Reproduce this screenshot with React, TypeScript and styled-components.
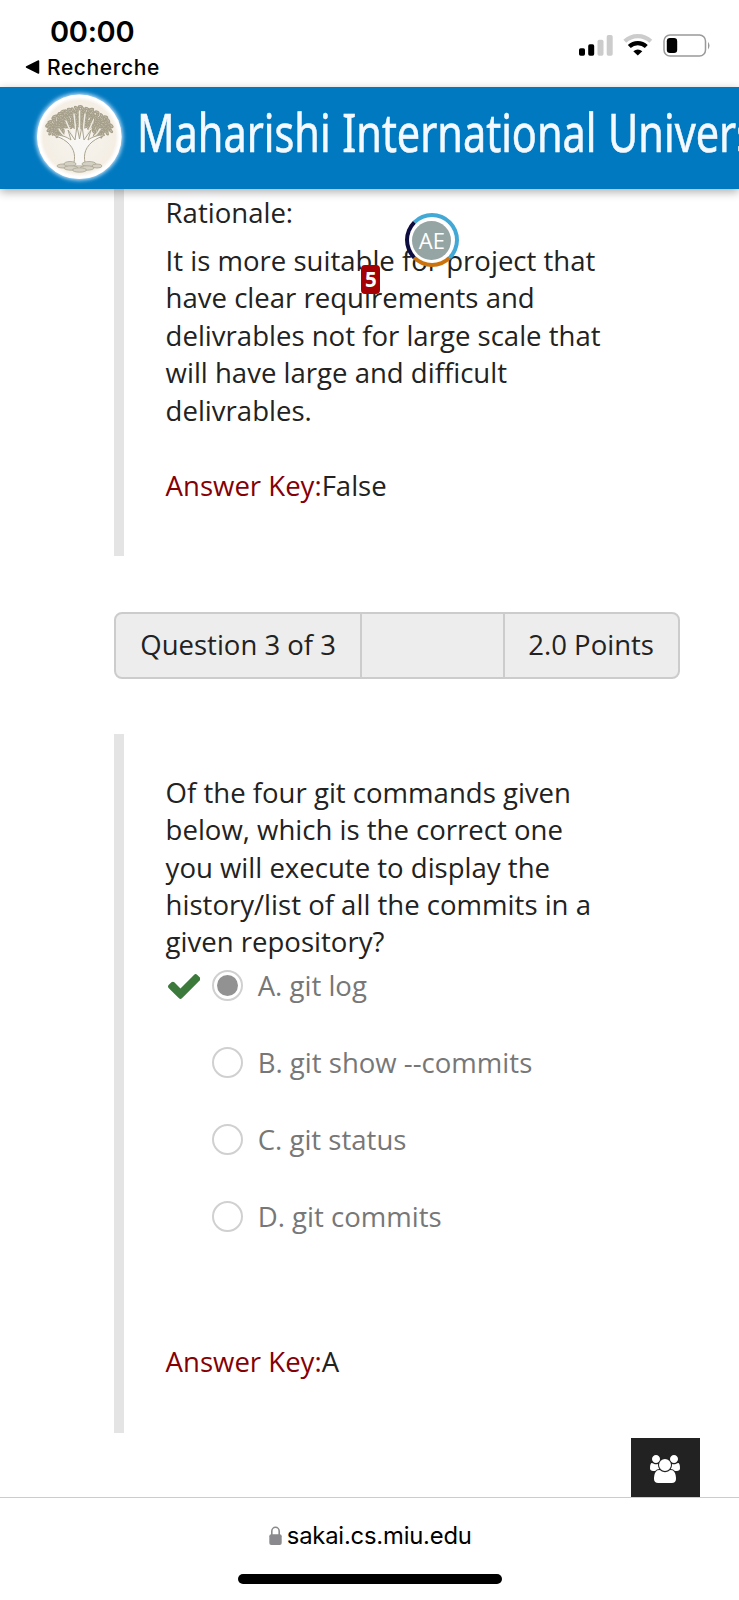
import React from "react";
import styled, { createGlobalStyle } from "styled-components";

const GlobalStyle = createGlobalStyle`
  * { box-sizing: border-box; }
  body { margin: 0; background: #fff; }
`;

const Screen = styled.div`
  width: 739px;
  height: 1600px;
  display: flex;
  flex-direction: column;
  background: #fff;
  color: #222;
  overflow: hidden;
  font-family: "Open Sans", sans-serif;
`;

const StatusBar = styled.div`
  height: 86.6px;
  flex: none;
  display: flex;
  justify-content: space-between;
  padding: 13px 27px 0 25px;
  color: #000;
  font-family: Inter, sans-serif;
`;

const Clock = styled.div`
  margin-left: 25px;
  height: 36px;
  line-height: 37px;
  font-size: 29px;
  font-weight: 600;
  letter-spacing: -0.3px;
`;

const BackLink = styled.div`
  display: flex;
  align-items: center;
  gap: 7px;
  height: 36px;
  font-size: 21px;
  font-weight: 500;
  letter-spacing: 0.6px;
`;

const Indicators = styled.div`
  display: flex;
  padding-top: 20px;
`;

const Header = styled.header`
  position: relative;
  z-index: 2;
  height: 102.4px;
  flex: none;
  display: flex;
  background: #0079c0;
  box-shadow: 0 3px 9px rgba(0, 0, 0, 0.32);
  padding-left: 30.5px;
`;

const SiteName = styled.div`
  margin-left: 9.8px;
  padding-top: 8px;
  line-height: 74px;
  font-family: "Noto Sans", sans-serif;
  font-size: 53px;
  color: #f4f9ff;
  white-space: pre;
  word-spacing: 1px;
  transform: scaleX(0.782);
  transform-origin: 0 0;
  -webkit-text-stroke: 0.6px #f4f9ff;
`;

const Content = styled.main`
  position: relative;
  flex: 1;
  min-height: 0;
  padding-left: 114.3px;
`;

const Panel = styled.section<{ $height: number; $top: number }>`
  height: ${(p) => p.$height}px;
  padding-top: ${(p) => p.$top}px;
  padding-left: 41.3px;
  border-left: 10px solid #e4e4e4;
  font-size: 27.55px;
  line-height: 37.4px;
`;

const Line = styled.div`
  white-space: nowrap;
`;

const Paragraph = styled.div<{ $gap?: number }>`
  margin-top: ${(p) => p.$gap ?? 0}px;
`;

const AnswerKey = styled.div<{ $gap: number }>`
  margin-top: ${(p) => p.$gap}px;
`;

const KeyLabel = styled.span`
  color: #850005;
`;

const QuestionBar = styled.div`
  display: flex;
  width: 565.5px;
  height: 67px;
  margin: 55.4px 0 55px;
  border: 2px solid #ccc;
  border-radius: 8px;
  background: #ededed;
  font-size: 27.5px;
  line-height: 62px;
`;

const BarCell = styled.div<{ $width: number }>`
  width: ${(p) => p.$width}px;
  padding-left: 24px;
  white-space: nowrap;
  & + & { border-left: 2px solid #ccc; padding-left: 23px; }
`;

const Options = styled.div`
  padding-top: 6px;
`;

const Option = styled.div`
  display: flex;
  align-items: center;
  height: 37.4px;
  margin-bottom: 39.5px;
  color: #777;
`;

const Mark = styled.div`
  width: 46.5px;
  padding: 2px 0 0 2.3px;
  display: flex;
`;

const Radio = styled.span`
  display: flex;
  align-items: center;
  justify-content: center;
  width: 31px;
  height: 31px;
  margin-right: 14.6px;
  border: 2px solid #d0d0d0;
  border-radius: 50%;
`;

const RadioDot = styled.span`
  width: 21px;
  height: 21px;
  border-radius: 50%;
  background: #929292;
`;

const Avatar = styled.div`
  position: absolute;
  left: 404.6px;
  top: 24px;
  width: 54.5px;
  height: 54.5px;
  padding: 3.6px;
  border: 4px solid #42a8d6;
  border-bottom-color: #cb720c;
  border-left-color: #0d0d40;
  border-radius: 50%;
  background: #fff;
`;

const Initials = styled.div`
  width: 39.3px;
  height: 39.3px;
  border-radius: 50%;
  background: #95a5a3;
  color: #fff;
  text-align: center;
  font: 22px/38px "Open Sans", sans-serif;
`;

const CountBadge = styled.div`
  position: absolute;
  left: 361.3px;
  top: 76px;
  width: 19px;
  height: 29px;
  border-radius: 4px;
  background: #a50004;
  color: #fff;
  text-align: center;
  font-size: 20.5px;
  line-height: 29px;
  font-weight: 700;
`;

const PeopleButton = styled.button`
  position: absolute;
  left: 630.5px;
  bottom: 0;
  width: 69px;
  height: 59.5px;
  padding: 4px 0 0;
  border: 0;
  background: #222;
  display: flex;
  align-items: center;
  justify-content: center;
`;

const BrowserBar = styled.footer`
  height: 103px;
  flex: none;
  display: flex;
  flex-direction: column;
  align-items: center;
  border-top: 1px solid #ccc;
  background: #fff;
`;

const Address = styled.div`
  display: flex;
  align-items: center;
  gap: 4.5px;
  height: 76px;
  padding-left: 2px;
  color: #000;
  font: 23.8px/30px Inter, sans-serif;
  letter-spacing: -0.2px;
`;

const HomeIndicator = styled.div`
  width: 264px;
  height: 10px;
  border-radius: 5px;
  background: #000;
`;

const leaves = Array.from({ length: 190 }, (_, i) => {
  const angle = i * 2.39996;
  const r = Math.sqrt((i + 0.5) / 190);
  return {
    x: 48.5 + Math.cos(angle) * r * 33,
    y: 34 + Math.sin(angle) * r * 15 + Math.abs(Math.cos(angle) * r) * 6,
    turn: (i * 67) % 180,
  };
}).filter((l) => !(l.y > 41 && Math.abs(l.x - 48.5) < 14));

const Logo = styled.svg`
  flex: none;
`;

const TreeLogo = () => (
  <Logo width="97" height="102" viewBox="0 0 97 102">
    <defs>
      <filter id="glow" x="-20%" y="-20%" width="140%" height="140%">
        <feGaussianBlur stdDeviation="2" />
      </filter>
      <filter id="soft">
        <feGaussianBlur stdDeviation="0.6" />
      </filter>
      <radialGradient id="cream">
        <stop offset="0" stopColor="#f7f5f0" />
        <stop offset="0.9" stopColor="#f4eee4" />
        <stop offset="1" stopColor="#fff" />
      </radialGradient>
    </defs>
    <circle cx="48.3" cy="49.8" r="43.5" fill="#cfe9ff" filter="url(#glow)" />
    <circle cx="48.3" cy="49.8" r="42.3" fill="#fff" />
    <circle cx="48.3" cy="49.8" r="40" fill="url(#cream)" />
    <g filter="url(#soft)">
      <g stroke="#a59f8a" strokeWidth="1.2" fill="#c8c2b2">
        {leaves.map((l, i) => (
          <ellipse key={i} cx={l.x} cy={l.y} rx="2.1" ry="1" transform={`rotate(${l.turn} ${l.x} ${l.y})`} />
        ))}
      </g>
      <g stroke="#eeebe2" fill="none" strokeWidth="1.5" strokeLinecap="round">
        <path d="M43 56 C36 52 31 48 28 42 M44 55 L35 34 M46 54 L43 27 M48.500 54 V24 M51 54 L54 27 M53 55 L62 34 M54 56 C61 52 66 48 69 42" />
      </g>
      <path
        d="M42 79 C45 70 44 62 36 55 C31 51 27 50 23 48 C31 48 36 50 40 53 L37 43 L44 53 L46 39 L48.500 52 L51 39 L53 53 L60 43 L57 53 C61 50 66 48 74 48 C70 50 66 51 61 55 C53 62 52 70 55 79Z"
        fill="#f8f7f3"
        stroke="#aaa491"
        strokeWidth="1"
      />
      <g fill="#d3cfc2" stroke="#aaa491" strokeWidth="0.8">
        <ellipse cx="32" cy="79" rx="6" ry="2" />
        <ellipse cx="39" cy="77" rx="6" ry="2.5" />
        <ellipse cx="58" cy="77" rx="7" ry="2.5" />
        <ellipse cx="66" cy="79" rx="5" ry="2" />
        <ellipse cx="40" cy="81" rx="7" ry="2.2" />
        <ellipse cx="56" cy="81" rx="7" ry="2.2" />
        <ellipse cx="48.5" cy="83" rx="7" ry="2.2" />
      </g>
    </g>
  </Logo>
);

const SignalIcon = () => (
  <svg width="155" height="26" viewBox="0 0 155 26">
    <rect x="22" y="15.2" width="6" height="7.6" rx="1.7" />
    <rect x="31.2" y="11.2" width="6" height="11.6" rx="1.7" />
    <g fill="#ccc">
      <rect x="40.5" y="6.8" width="6" height="16" rx="1.7" />
      <rect x="49.7" y="2" width="6" height="20.8" rx="1.7" />
    </g>
    <path d="M67.8 8.3 A19 19 0 0 1 93.8 8.3" fill="none" stroke="#ccc" strokeWidth="4.2" />
    <path d="M72.3 13.5 A12.2 12.2 0 0 1 89.3 13.5" fill="none" stroke="#000" strokeWidth="4.2" />
    <path d="M76.3 18.3 Q80.8 14.5 85.3 18.3 L80.8 22.5Z" />
    <rect x="107" y="1.9" width="41.5" height="21.2" rx="6" fill="none" stroke="#999" strokeWidth="1.5" />
    <rect x="109.8" y="5" width="10.4" height="15" rx="3.2" />
    <path d="M151 8.7 Q154 12.5 151 16.4Z" fill="#999" />
  </svg>
);

const CheckIcon = () => (
  <svg width="32.5" height="25" viewBox="121 334 1550 1188">
    <path fill="#3c7a3c" d="M1671 566q0 40-28 68l-724 724-136 136q-28 28-68 28t-68-28l-136-136-362-362q-28-28-28-68t28-68l136-136q28-28 68-28t68 28l294 295 656-657q28-28 68-28t68 28l136 136q28 28 28 68z" />
  </svg>
);

const PeopleIcon = () => (
  <svg width="30" height="28" viewBox="0 0 1920 1792">
    <path fill="#fff" d="M593 896q-162 5-265 128h-134q-82 0-138-40.500t-56-118.500q0-353 124-353 6 0 43.500 21t97.500 42.500 119 21.500q67 0 133-23-5 37-5 66 0 139 81 256zM1664 1533q0 120-73 189.500t-194 69.500h-874q-121 0-194-69.500t-73-189.500q0-53 3.500-103.500t14-109 26.500-108.500 43-97.500 62-81 85.500-53.500 111.500-20q10 0 43 21.500t73 48 107 48 135 21.500 135-21.500 107-48 73-48 43-21.500q61 0 111.500 20t85.500 53.500 62 81 43 97.500 26.500 108.500 14 109 3.500 103.500zM640 256q0 106-75 181t-181 75-181-75-75-181 75-181 181-75 181 75 75 181zM1344 640q0 159-112.500 271.500t-271.500 112.500-271.500-112.500-112.500-271.500 112.500-271.500 271.500-112.500 271.500 112.500 112.500 271.500zM1920 865q0 78-56 118.500t-138 40.500h-134q-103-123-265-128 81-117 81-256 0-29-5-66 66 23 133 23 59 0 119-21.500t97.500-42.500 43.500-21q124 0 124 353zM1792 256q0 106-75 181t-181 75-181-75-75-181 75-181 181-75 181 75 75 181z" />
  </svg>
);

const LockIcon = () => (
  <svg width="13" height="20" viewBox="0 0 13 20">
    <rect x="0.3" y="8.3" width="12.4" height="10.7" rx="2" fill="#8a8a8e" />
    <path d="M2.8 9 V5.3 a3.7 4 0 0 1 7.4 0 V9" fill="none" stroke="#8a8a8e" strokeWidth="1.6" />
  </svg>
);

const rationale = [
  "It is more suitable for project that",
  "have clear requirements and",
  "delivrables not for large scale that",
  "will have large and difficult",
  "delivrables.",
];

const question = [
  "Of the four git commands given",
  "below, which is the correct one",
  "you will execute to display the",
  "history/list of all the commits in a",
  "given repository?",
];

const options = ["A. git log", "B. git show --commits", "C. git status", "D. git commits"];
const chosen = 0;

export default function App() {
  return (
    <Screen>
      <GlobalStyle />
      <StatusBar>
        <div>
          <Clock>00:00</Clock>
          <BackLink>
            <svg width="15" height="14" viewBox="0 0 15 14">
              <path d="M1.5 7 L13.5 1 V13Z" stroke="#000" strokeWidth="1.5" strokeLinejoin="round" />
            </svg>
            Recherche
          </BackLink>
        </div>
        <Indicators>
          <SignalIcon />
        </Indicators>
      </StatusBar>
      <Header>
        <TreeLogo />
        <SiteName>Maharishi International University</SiteName>
      </Header>
      <Content>
        <Panel $height={367.3} $top={5.3}>
          <Line>Rationale:</Line>
          <Paragraph $gap={10.2}>
            {rationale.map((t) => <Line key={t}>{t}</Line>)}
          </Paragraph>
          <AnswerKey $gap={37.6}>
            <KeyLabel>Answer Key:</KeyLabel>False
          </AnswerKey>
        </Panel>
        <QuestionBar>
          <BarCell $width={244}>Question 3 of 3</BarCell>
          <BarCell $width={143} />
          <BarCell $width={174.5}>2.0 Points</BarCell>
        </QuestionBar>
        <Panel $height={699} $top={40.2}>
          <Paragraph>
            {question.map((t) => <Line key={t}>{t}</Line>)}
          </Paragraph>
          <Options>
            {options.map((t, i) => (
              <Option key={t}>
                <Mark>{i === chosen && <CheckIcon />}</Mark>
                <Radio>{i === chosen && <RadioDot />}</Radio>
                {t}
              </Option>
            ))}
          </Options>
          <AnswerKey $gap={107.8}>
            <KeyLabel>Answer Key:</KeyLabel>A
          </AnswerKey>
        </Panel>
        <Avatar>
          <Initials>AE</Initials>
        </Avatar>
        <CountBadge>5</CountBadge>
        <PeopleButton aria-label="Participants">
          <PeopleIcon />
        </PeopleButton>
      </Content>
      <BrowserBar>
        <Address>
          <LockIcon />
          sakai.cs.miu.edu
        </Address>
        <HomeIndicator />
      </BrowserBar>
    </Screen>
  );
}
